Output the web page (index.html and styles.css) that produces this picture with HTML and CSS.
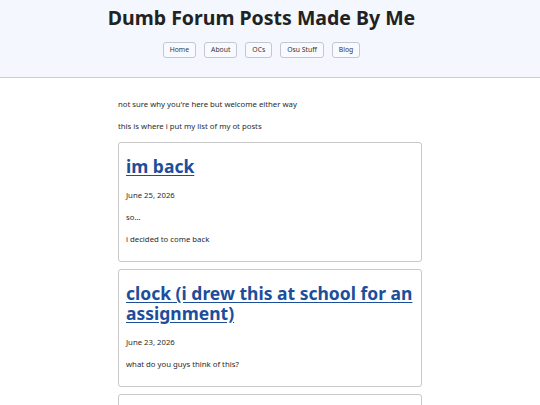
FILE: index.html
```html
<!DOCTYPE html>
<html lang="en">
<head>
<meta charset="utf-8">
<title>Dumb Forum Posts Made By Me</title>
<link rel="stylesheet" href="styles.css">
</head>
<body>
<header class="site-header">
  <h1 class="site-title">Dumb Forum Posts Made By Me</h1>
  <nav class="site-nav">
    <a class="nav-btn" href="#">Home</a>
    <a class="nav-btn" href="#">About</a>
    <a class="nav-btn" href="#">OCs</a>
    <a class="nav-btn" href="#">Osu Stuff</a>
    <a class="nav-btn" href="#">Blog</a>
  </nav>
</header>
<main class="content">
  <p class="intro">not sure why you're here but welcome either way</p>
  <p class="intro">this is where i put my list of my ot posts</p>
  <article class="post">
    <h2 class="post-title"><a href="#">im back</a></h2>
    <p class="post-date">June 25, 2026</p>
    <p>so...</p>
    <p>i decided to come back</p>
  </article>
  <article class="post">
    <h2 class="post-title"><a href="#">clock (i drew this at school for an assignment)</a></h2>
    <p class="post-date">June 23, 2026</p>
    <p>what do you guys think of this?</p>
  </article>
  <article class="post">
    <h2 class="post-title"><a href="#">more stuff</a></h2>
    <p class="post-date">June 20, 2026</p>
    <p>hello</p>
  </article>
</main>
</body>
</html>
```

FILE: styles.css
```css
* { box-sizing: border-box; }
html, body { margin: 0; padding: 0; }
body {
  font-family: "Noto Sans", "Open Sans", sans-serif;
  font-size: 7.75px;
  line-height: 13px;
  color: #2a2a2a;
  background: #fff;
}
.site-header {
  background: #f4f7fe;
  border-bottom: 1px solid #c9ccd4;
  padding: 5px 17px 19px 0;
  text-align: center;
}
.site-title {
  margin: 0;
  font-size: 19.5px;
  line-height: 26px;
  font-weight: 700;
  color: #222;
}
.site-nav {
  display: flex;
  justify-content: center;
  gap: 8px;
  margin-top: 11px;
}
.nav-btn {
  display: inline-block;
  height: 16px;
  line-height: 14px;
  padding: 0 6px;
  font-size: 6.8px;
  color: #333;
  text-decoration: none;
  border: 1px solid #c3c7cf;
  border-radius: 3px;
  background: #f8faff;
}
.content {
  width: 304px;
  margin: 0 auto;
  padding-top: 11px;
}
.content p { margin: 9px 0; }
.post {
  border: 1px solid #c8c8c8;
  border-radius: 3px;
  padding: 0 7px;
  margin: 0 0 7px;
  overflow: hidden;
}
.post-title {
  margin: 13px 0;
  font-size: 17.5px;
  line-height: 20px;
  font-weight: 700;
}
.post-title a {
  color: #1d4e9a;
  text-decoration: underline;
  text-underline-offset: 2px;
}
.post p:last-child { margin-bottom: 15px; }
```
